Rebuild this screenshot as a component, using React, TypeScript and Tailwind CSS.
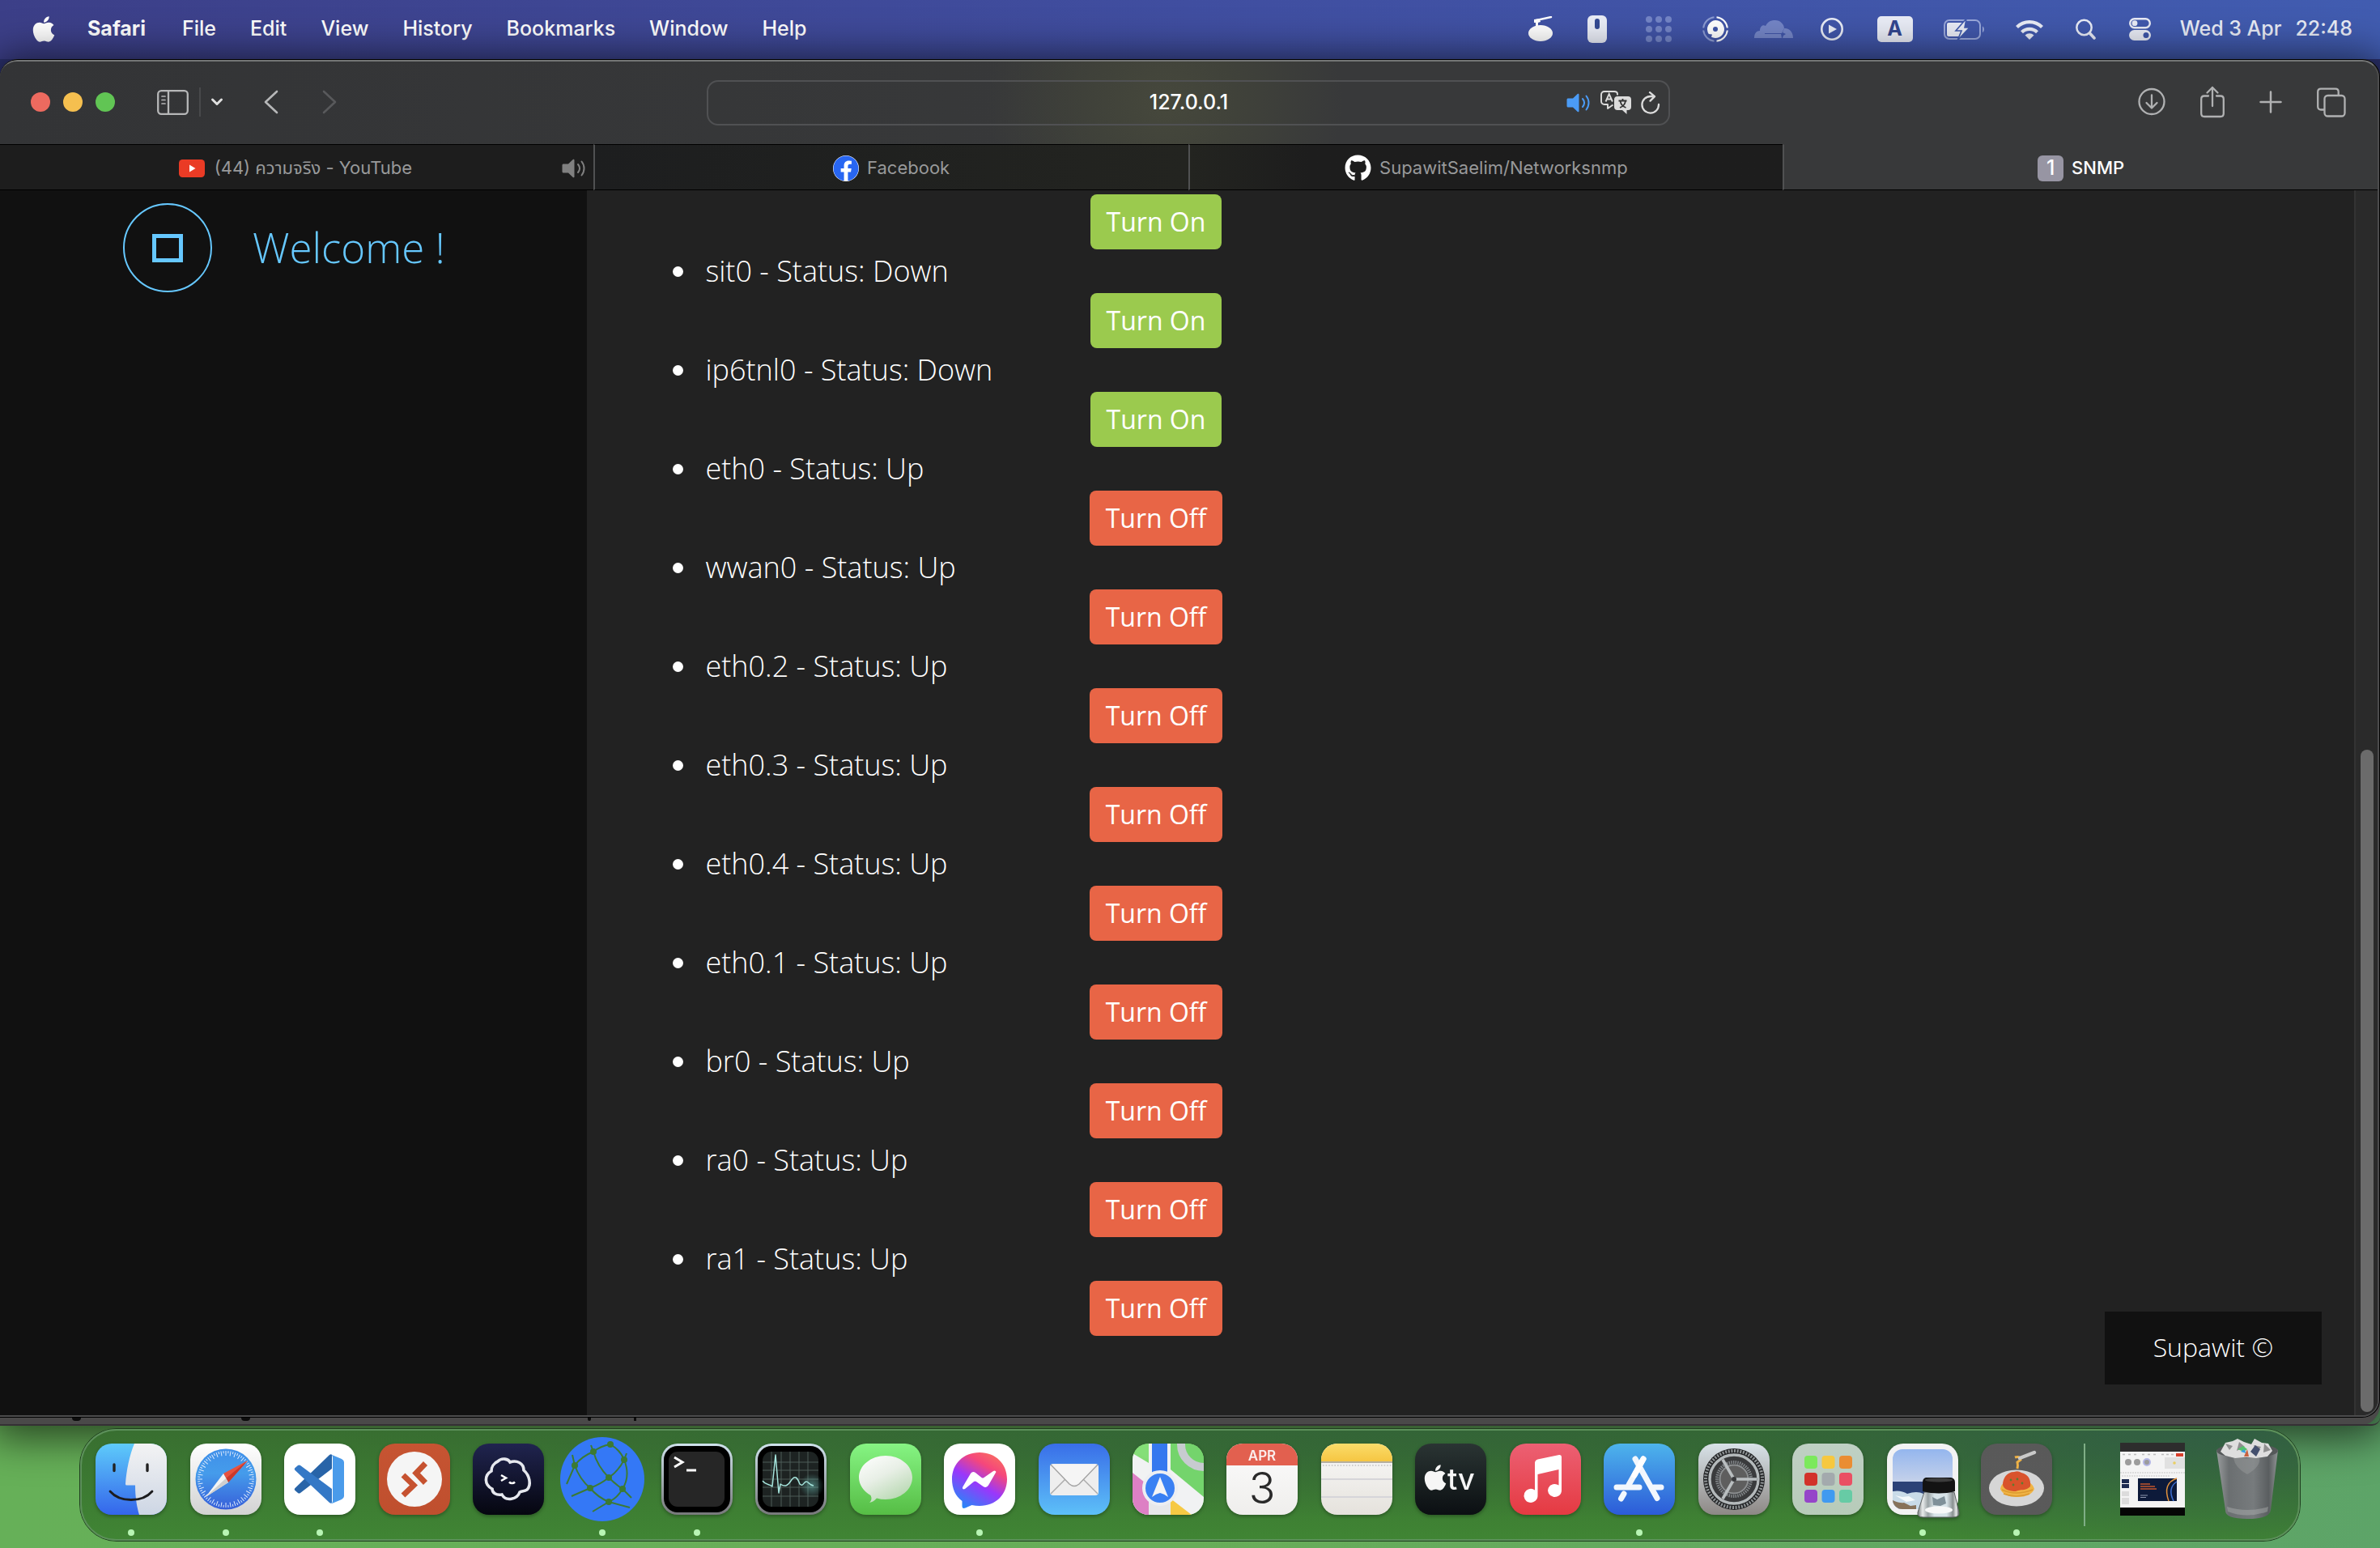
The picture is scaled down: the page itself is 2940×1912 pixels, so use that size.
import React from "react";
import { FaApple, FaFacebook, FaGithub } from "react-icons/fa";

const menus = ["File", "Edit", "View", "History", "Bookmarks", "Window", "Help"];

const interfaces = [
  { name: "sit0", up: false },
  { name: "ip6tnl0", up: false },
  { name: "eth0", up: true },
  { name: "wwan0", up: true },
  { name: "eth0.2", up: true },
  { name: "eth0.3", up: true },
  { name: "eth0.4", up: true },
  { name: "eth0.1", up: true },
  { name: "br0", up: true },
  { name: "ra0", up: true },
  { name: "ra1", up: true },
];

/* ---------- menu bar ---------- */

function MenuBar() {
  return (
    <header className="flex h-[73px] items-center justify-between bg-linear-to-r from-[#3c3f88] via-[#404ea0] to-[#415cb0] pr-[34px] pb-[2px] pl-[36px] text-[25px] font-medium text-white">
      <nav aria-label="Menu bar" className="flex items-center gap-[42px]">
        <button aria-label="Apple menu">
          <FaApple size={36} />
        </button>
        <button className="-ml-[6px] mr-[3px] font-bold">Safari</button>
        {menus.map((m) => (
          <button key={m}>{m}</button>
        ))}
      </nav>
      <div className="flex items-center text-[#e9ecf6]">
        <button aria-label="Recipes" className="mr-[43px]">
          <svg width="30" height="32" viewBox="0 0 30 32" fill="white">
            <ellipse cx="15" cy="21" rx="15" ry="10" />
            <path d="M10 5 28 1" stroke="white" strokeWidth="2.4" strokeLinecap="round" />
            <path d="M7 4 14 3 15 7 12 8v5H9V8H7z" />
          </svg>
        </button>
        <button aria-label="Mouse" className="mr-[48px]">
          <svg width="24" height="34" viewBox="0 0 24 34">
            <rect width="24" height="34" rx="6" fill="currentColor" />
            <rect x="9" y="4" width="6" height="13" rx="3" fill="#344a93" />
          </svg>
        </button>
        <button aria-label="Grid" className="mr-[38px]">
          <svg width="32" height="32" viewBox="0 0 32 32" fill="#7485c6">
            {[4, 16, 28].map((y) => [4, 16, 28].map((x) => <circle key={`${x}-${y}`} cx={x} cy={y} r="4" />))}
          </svg>
        </button>
        <button aria-label="Disc" className="mr-[32px]">
          <svg width="32" height="32" viewBox="0 0 32 32" fill="none">
            <path d="M17.5 1.2A15 15 0 0 1 30.8 14.500M30.800 17.500A15 15 0 0 1 17.500 30.800" stroke="white" strokeWidth="2" />
            <path d="M14.500 1.200A15 15 0 0 0 1.200 14.500M1.200 17.500A15 15 0 0 0 14.500 30.800" stroke="#8c9bd2" strokeWidth="2" />
            <path d="M16 5a11 11 0 1 1-5 20.800l1-3.300-4.200-.5A11 11 0 0 1 16 5z" fill="white" />
            <circle cx="16" cy="16" r="3" fill="#3f55a8" />
          </svg>
        </button>
        <button aria-label="Cloud" className="mr-[34px]">
          <svg width="48" height="24" viewBox="0 0 48 24" fill="#7485c6">
            <path d="M0 23c0-6 3-9 7-9 0-6 4-8 7-6C17 2 21 1 26 1c6 0 11 5 11 10l-3 6H13v1h20l1 5z" />
            <path d="m37 11 1 0c6 0 10 5 10 12H35l1-3 3-2-4-2z" />
          </svg>
        </button>
        <button aria-label="Now playing" className="mr-[42px]">
          <svg width="28" height="28" viewBox="0 0 28 28">
            <circle cx="14" cy="14" r="12.700" fill="none" stroke="currentColor" strokeWidth="2.600" />
            <path d="M10 8.500v11L20 14z" fill="currentColor" />
          </svg>
        </button>
        <button aria-label="Input source" className="mr-[38px] flex h-[32px] w-[44px] items-center justify-center rounded-[5px] bg-[#e9ecf6] text-[25px] font-bold text-[#33478f]">
          A
        </button>
        <button aria-label="Battery" className="mr-[38px]">
          <svg width="51" height="26" viewBox="0 0 51 26">
            <rect x="1" y="2" width="44" height="23" rx="6" fill="none" stroke="#9aa8da" strokeWidth="2" />
            <path d="M48 9.500c2.500.8 2.500 6.700 0 7.500z" fill="#9aa8da" />
            <path d="M6 5h17v17H6a2 2 0 0 1-2-2V7a2 2 0 0 1 2-2z" fill="currentColor" />
            <path d="M28 0 15 15h7l-5 12L32 11h-6z" fill="currentColor" stroke="#405aad" strokeWidth="1.600" />
          </svg>
        </button>
        <button aria-label="Wi-Fi" className="mr-[40px]">
          <svg width="34" height="26" viewBox="0 0 34 26" fill="none" stroke="currentColor" strokeWidth="4.200">
            <path d="M1.500 10.500a22 22 0 0 1 31 0" />
            <path d="M7.500 16.800a13.500 13.500 0 0 1 19 0" />
            <path d="m17 26-5.500-5.500a8 8 0 0 1 11 0z" fill="currentColor" stroke="none" />
          </svg>
        </button>
        <button aria-label="Search" className="mr-[41px]">
          <svg width="25" height="26" viewBox="0 0 25 26" fill="none" stroke="currentColor" strokeLinecap="round">
            <circle cx="10.500" cy="11" r="9.200" strokeWidth="2.500" />
            <path d="m17.500 18 5.500 6" strokeWidth="3.600" />
          </svg>
        </button>
        <button aria-label="Control Centre" className="mr-[36px]">
          <svg width="27" height="28" viewBox="0 0 27 28">
            <rect x="1.200" y="1.200" width="24.600" height="11" rx="5.500" fill="none" stroke="currentColor" strokeWidth="2.400" />
            <circle cx="7" cy="6.700" r="3.400" fill="currentColor" />
            <rect y="15" width="27" height="13" rx="6.500" fill="currentColor" />
            <circle cx="21" cy="21.500" r="3.500" fill="#3e56a8" />
          </svg>
        </button>
        <button className="flex gap-[17px]">
          <span>Wed 3 Apr</span>
          <span>22:48</span>
        </button>
      </div>
    </header>
  );
}

/* ---------- browser chrome ---------- */

function Speaker({ className }: { className: string }) {
  return (
    <svg width="30" height="24" viewBox="0 0 30 24" className={className} fill="none">
      <path d="M2.500 6.500H8L13.500 1.200c1-.9 2-.5 2 .6v20.400c0 1.100-1 1.500-2 .6L8 17.500H2.500C1 17.500.500 17 .500 15.500v-7c0-1.500.5-2 2-2z" fill="currentColor" />
      <path d="M20 7c2.500 3 2.500 7 0 10M24.500 3.500c4 5 4 12 0 17" stroke="currentColor" strokeWidth="2" strokeLinecap="round" />
    </svg>
  );
}

function Toolbar() {
  return (
    <div className="flex h-[102px] items-center bg-[radial-gradient(ellipse_220px_200px_at_49%_50%,#46483c,#40423a_40%,transparent)]">
      <div className="flex flex-1 items-center pb-[2px] pl-[38px] text-[#b6b7b8]">
        <div className="flex gap-[16px]">
          <button aria-label="Close" className="size-[24px] rounded-full bg-[#ed6a5f]" />
          <button aria-label="Minimise" className="size-[24px] rounded-full bg-[#f5bf4f]" />
          <button aria-label="Zoom" className="size-[24px] rounded-full bg-[#61c554]" />
        </div>
        <button aria-label="Show sidebar" className="ml-[52px]">
          <svg width="39" height="31" viewBox="0 0 39 31" fill="none" stroke="currentColor" strokeWidth="2.300">
            <rect x="1.200" y="1.200" width="36.600" height="28.600" rx="4" />
            <path d="M14 1v29" />
            <path d="M6 8h4M6 12.500h4M6 17h4" strokeWidth="1.700" strokeLinecap="round" />
          </svg>
        </button>
        <div className="ml-[13px] h-[36px] w-[2px] bg-[#48494b]" />
        <button aria-label="Tab groups" className="ml-[12px]">
          <svg width="16" height="12" viewBox="0 0 16 12" fill="none" stroke="#e0e0e0" strokeWidth="3" strokeLinecap="round" strokeLinejoin="round">
            <path d="m2.500 3 5.500 5.500L13.500 3" />
          </svg>
        </button>
        <button aria-label="Back" className="ml-[50px]">
          <svg width="18" height="30" viewBox="0 0 18 30" fill="none" stroke="currentColor" strokeWidth="2.600" strokeLinecap="round" strokeLinejoin="round">
            <path d="M16 2 2 15l14 13" />
          </svg>
        </button>
        <button aria-label="Forward" className="ml-[54px] text-[#58595b]">
          <svg width="18" height="30" viewBox="0 0 18 30" fill="none" stroke="currentColor" strokeWidth="2.600" strokeLinecap="round" strokeLinejoin="round">
            <path d="m2 2 14 13L2 28" />
          </svg>
        </button>
      </div>
      <div className="flex h-[56px] w-[40.500%] items-center gap-[12px] rounded-[14px] border-2 border-[#505153] pr-[10px]">
        <input
          aria-label="Address"
          defaultValue="127.0.0.1"
          className="min-w-0 flex-1 bg-transparent pl-[139px] text-center text-[25px] font-medium text-white outline-none"
        />
        <button aria-label="Mute this tab">
          <Speaker className="text-[#4b9bf5]" />
        </button>
        <button aria-label="Translate" className="text-[#dcdcdc]">
          <svg width="38" height="30" viewBox="0 0 38 30" fill="none">
            <path d="M15.500 17.500 9 22v-5H5c-2.500 0-4-1.500-4-4V5c0-2.500 1.500-4 4-4h12c2.500 0 4 1.500 4 3v1.500" stroke="currentColor" strokeWidth="1.900" strokeLinejoin="round" />
            <path d="m6.500 13.500 4.200-9.500 4.200 9.500M8 10.500h5.500" stroke="currentColor" strokeWidth="1.900" />
            <path d="M21 7h13c2.700 0 4 1.500 4 4v9c0 2.500-1.300 4-4 4h-1.500v5L27 24h-6c-2.500 0-4-1.500-4-4v-9c0-2.500 1.500-4 4-4z" fill="currentColor" />
            <path d="M22.500 12.500h10M27.500 10v2.500M24 21c4-1.500 6.500-4.500 7-8.500M31.500 21c-4-1.500-6.500-4.500-7-8.500" stroke="#333" strokeWidth="1.800" />
          </svg>
        </button>
        <button aria-label="Reload" className="text-[#dcdcdc]">
          <svg width="24" height="28" viewBox="0 0 24 28" fill="none" stroke="currentColor" strokeWidth="2.300" strokeLinecap="round" strokeLinejoin="round">
            <path d="M22 16a10.300 10.300 0 1 1-10-10h4.500M11 1.200l6 4.900-5.500 5.500" />
          </svg>
        </button>
      </div>
      <div className="flex flex-1 items-center justify-end gap-[43px] pr-[39px] pb-[2px] text-[#b0b1b2]">
        <button aria-label="Downloads">
          <svg width="34" height="36" viewBox="0 0 34 36" fill="none" stroke="currentColor" strokeWidth="2.300" strokeLinecap="round" strokeLinejoin="round">
            <circle cx="17" cy="17.500" r="15.500" />
            <path d="M17 9.500v15M10.500 19l6.500 6.500 6.500-6.500" />
          </svg>
        </button>
        <button aria-label="Share">
          <svg width="30" height="40" viewBox="0 0 30 40" fill="none" stroke="currentColor" strokeWidth="2.300" strokeLinecap="round" strokeLinejoin="round">
            <path d="M10 12.500H5c-2.500 0-3.800 1.300-3.800 3.800v18c0 2.400 1.300 3.700 3.800 3.700h20c2.500 0 3.800-1.300 3.800-3.700v-18c0-2.500-1.300-3.800-3.800-3.800h-5M15 25V2M8.500 8.500 15 2l6.500 6.500" />
          </svg>
        </button>
        <button aria-label="New tab">
          <svg width="28" height="28" viewBox="0 0 28 28" stroke="currentColor" strokeWidth="2.500" strokeLinecap="round">
            <path d="M14 1.500v25M1.500 14h25" />
          </svg>
        </button>
        <button aria-label="Tab overview">
          <svg width="36" height="37" viewBox="0 0 36 37" fill="none" stroke="currentColor" strokeWidth="2.300" strokeLinejoin="round">
            <rect x="9.500" y="10" width="25" height="25.500" rx="4" />
            <path d="M9.500 27.500H5c-2.300 0-3.800-1.500-3.800-3.800V5.500C1.200 3 2.700 1.700 5 1.700h18c2.300 0 3.700 1.300 3.700 3.800V10" />
          </svg>
        </button>
      </div>
    </div>
  );
}

function TabBar() {
  const tab = "flex min-w-0 flex-1 items-center justify-center border-y border-black pt-[2px]";
  return (
    <div role="tablist" aria-label="Tabs" className="flex h-[57px] bg-[#38393a] text-[22px] text-[#98999a]">
      <button role="tab" className={`${tab} gap-[12px] bg-[#1d1d1d]`}>
        <span className="w-[36px]" />
        <span className="flex flex-1 items-center justify-center gap-[12px]">
          <svg width="32" height="22" viewBox="0 0 32 22">
            <rect width="32" height="22" rx="4.500" fill="#ea3b25" />
            <path d="M13 6.500v9l7.500-4.500z" fill="white" />
          </svg>
          <span>(44) ความจริง - YouTube</span>
        </span>
        <Speaker className="mr-[9px] text-[#808080]" />
      </button>
      <button role="tab" className={`${tab} gap-[10px] border-l-2 border-l-[#505152] bg-linear-to-r from-[#1d1e1f] to-[#232420]`}>
        <span className="rounded-full bg-white text-[#2866f2]">
          <FaFacebook size={32} />
        </span>
        Facebook
      </button>
      <button role="tab" className={`${tab} gap-[10px] border-l-2 border-l-[#505152] bg-linear-to-r from-[#232420] to-[#1d1d1d] to-20%`}>
        <FaGithub size={33} className="text-white" />
        SupawitSaelim/Networksnmp
      </button>
      <button role="tab" aria-selected className={`${tab} gap-[10px] border-l-2 border-t-transparent border-l-[#505152] font-medium text-white`}>
        <span className="flex size-[32px] items-center justify-center rounded-[6px] bg-[#9795a3] text-[25px]">1</span>
        SNMP
      </button>
    </div>
  );
}

/* ---------- web page ---------- */

function PowerButton({ up }: { up: boolean }) {
  return (
    <div className="flex justify-center">
      <button
        className={`h-[68px] rounded-[8px] px-[20px] text-[32px] leading-[68px] font-normal ${up ? "bg-[#e86546]" : "bg-[#9bca4e]"}`}
      >
        {up ? "Turn Off" : "Turn On"}
      </button>
    </div>
  );
}

function WebPage() {
  return (
    <div className="flex flex-1 bg-[#222222] font-['Open_Sans',sans-serif] font-light text-white">
      <aside className="w-[24.700%] bg-[#111111] pt-[16px] pl-[152px] text-[#66c8ff]">
        <div className="flex items-center gap-[50px]">
          <div className="flex size-[110px] items-center justify-center rounded-full border-2 border-[#66c8ff]">
            <div className="h-[35px] w-[38px] border-[5px] border-[#66c8ff]" />
          </div>
          <h1 className="pb-[3px] text-[51px] leading-[72px]">Welcome !</h1>
        </div>
      </aside>
      <main className="flex flex-1 justify-between pt-[5px]">
        <div className="ml-[146px] w-[51%] pb-[98px]">
          <PowerButton up={false} />
          <ul className="list-disc text-[36px] leading-[54px]">
            {interfaces.map((i) => (
              <li key={i.name} className="-ml-[8px] pl-[8px]">
                {i.name} - Status: {i.up ? "Up" : "Down"}
                <PowerButton up={i.up} />
              </li>
            ))}
          </ul>
        </div>
        <footer className="mr-[40px] mb-[38px] self-end bg-[#111111] px-[60px] pb-[2px] text-[32px] leading-[88px]">Supawit ©</footer>
      </main>
      <div className="flex w-[29px] flex-col items-center border-l-2 border-[#333333] bg-[#2a2a2a]">
        <div className="grow-[691]" />
        <div className="w-[16px] grow-[818] rounded-full bg-[#6b6b6b]" />
        <div className="h-[4px]" />
      </div>
    </div>
  );
}

/* ---------- dock icons, each drawn on an 88 x 88 tile ---------- */

function Tile({ id, from, to, children }: { id: string; from: string; to: string; children?: React.ReactNode }) {
  return (
    <svg width="88" height="88" viewBox="0 0 88 88" className="overflow-visible drop-shadow-[0_2px_2px_rgba(0,0,0,0.3)]">
      <defs>
        <linearGradient id={`${id}-bg`} x1="0" y1="0" x2="0" y2="1">
          <stop offset="0" stopColor={from} />
          <stop offset="1" stopColor={to} />
        </linearGradient>
        <clipPath id={`${id}-clip`}>
          <rect width="88" height="88" rx="20" />
        </clipPath>
      </defs>
      <rect width="88" height="88" rx="20" fill={`url(#${id}-bg)`} />
      <g clipPath={`url(#${id}-clip)`}>{children}</g>
    </svg>
  );
}

const ring = (n: number) => Array.from({ length: n }, (_, k) => (k * 360) / n);

const Finder = () => (
  <Tile id="finder" from="#5ecbfa" to="#3465eb">
    <defs>
      <linearGradient id="finder-r" x1="0" y1="0" x2="0" y2="1">
        <stop offset="0" stopColor="#f3f3f4" />
        <stop offset="1" stopColor="#cdd6e4" />
      </linearGradient>
    </defs>
    <path d="M48 0C42 14 38 34 37 50q0 1.500 1.500 1.500H49C49 66 51 78 54 88h34V0z" fill="url(#finder-r)" />
    <path d="M23 26v7.500M64 26v7.500" stroke="#222" strokeWidth="3.400" strokeLinecap="round" />
    <path d="M18 59c12 14 40 14 52 0" fill="none" stroke="#1c1c1e" strokeWidth="2.800" strokeLinecap="round" />
  </Tile>
);

const Safari = () => (
  <Tile id="safari" from="#ffffff" to="#d2d2d2">
    <defs>
      <linearGradient id="safari-c" x1="0" y1="0" x2="0" y2="1">
        <stop offset="0" stopColor="#3f8fe9" />
        <stop offset=".4" stopColor="#459ceb" />
        <stop offset="1" stopColor="#375fd9" />
      </linearGradient>
    </defs>
    <circle cx="44" cy="44" r="37.500" fill="url(#safari-c)" />
    {ring(72).map((a, k) => (
      <path key={a} d={k % 2 ? "M44 9v3" : "M44 9v6"} stroke="#dceafc" strokeWidth="1" transform={`rotate(${a} 44 44)`} />
    ))}
    <path d="M71 21 41 37l6 11z" fill="#e8523f" />
    <path d="m71 21-24 27-3-5z" fill="#c9392c" />
    <path d="M19 66 41 37l6 11z" fill="#f4f4f4" />
    <path d="m19 66 28-18-3-5z" fill="#cfcfcf" />
  </Tile>
);

const VSCode = () => (
  <Tile id="code" from="#ffffff" to="#ffffff">
    <path d="M13.500 55c-1 1-1 2 0 3l3.500 3c1 .8 2 .7 3 0l39-30V14q-1-1.500-3 0z" fill="#2864a8" />
    <path d="M13.500 33c-1-1-1-2 0-3l3.500-3c1-.8 2-.7 3 0l39 29v17q-1 1.500-3 0z" fill="#3478c6" />
    <path d="M58 13.500 71 19q3 1.500 3 4v42q0 2.500-3 4l-13 5.500q2-1 2-4v-53q0-3-2-4z" fill="#4a9bea" />
  </Tile>
);

const RemoteDesktop = () => (
  <Tile id="rdp" from="#c65432" to="#bf4f2e">
    <circle cx="44" cy="44" r="34" fill="#f5f5f5" />
    <g fill="none" stroke="#c65230" strokeWidth="7">
      <path d="m30 39 13 12.500L30 64" />
      <path d="M57.500 24.500 46 36.500l11.500 12" />
    </g>
  </Tile>
);

const Termius = () => (
  <Tile id="termius" from="#20244f" to="#05060f">
    <path
      d="M31 22c5-5 13-3 15 1 8-3 17 1 17 10 7 6 10 18 4 24-3 2-7 2-9 3-3 9-17 12-22 3-7 1-12-2-12-7-10-5-10-17-1-22 0-5 3-10 8-12z"
      fill="none"
      stroke="#e6e8ee"
      strokeWidth="3.600"
    />
    <path d="m35 39 6 3.500-6 3.500" fill="none" stroke="white" strokeWidth="2.600" />
    <path d="M45 47.500c2 2 5 2 7 0" fill="none" stroke="white" strokeWidth="2.600" />
  </Tile>
);

const NetworkGlobe = () => (
  <svg width="88" height="88" viewBox="0 0 88 88" className="overflow-visible">
    <circle cx="44" cy="44" r="52" fill="#3478f6" />
    <g fill="none" stroke="#3c7a33" strokeWidth="2">
      <path d="M30 2 33 10Q42 3 54 1M33 10Q18 16 10 27L0 50M10 27 7 14M33 10Q38 28 52 42M54 1Q66 8 71 20L74 12M71 20Q64 34 52 42M71 20Q79 40 69 56M10 27Q16 44 29 55M52 42Q42 50 29 55M52 42Q60 50 69 56M29 55 6 65M29 55Q38 66 52 72M69 56Q62 68 52 72M69 56 80 67M52 72 32 84M52 72 78 79" />
    </g>
    <g fill="#3c7a33">
      {[[54, 1], [33, 10], [71, 20], [10, 27], [52, 42], [29, 55], [69, 56], [52, 72]].map(([x, y]) => (
        <circle key={`${x}-${y}`} cx={x} cy={y} r="4" />
      ))}
    </g>
  </svg>
);

const Terminal = () => (
  <Tile id="terminal" from="#cfe2ec" to="#77787a">
    <rect x="3" y="3" width="82" height="82" rx="17" fill="black" />
    <rect x="9" y="10" width="69" height="68" rx="11" fill="#262626" />
    <path d="m16 17 10 6-10 6M31 33h12" fill="none" stroke="white" strokeWidth="3" />
  </Tile>
);

const Activity = () => (
  <Tile id="activity" from="#cfe2ec" to="#77787a">
    <defs>
      <radialGradient id="activity-glow">
        <stop offset="0" stopColor="#6fc7bd" stopOpacity=".5" />
        <stop offset="1" stopColor="#6fc7bd" stopOpacity="0" />
      </radialGradient>
    </defs>
    <rect x="3" y="3" width="82" height="82" rx="17" fill="black" />
    <rect x="9" y="10" width="69" height="68" rx="11" fill="#1d2322" />
    <path d="M20 10v68M32 10v68M43 10v68M54 10v68M65 10v68M9 23h69M9 33h69M9 44h69M9 54h69M9 65h69" stroke="#52625f" strokeWidth=".9" />
    <circle cx="70" cy="52" r="15" fill="url(#activity-glow)" />
    <path d="M9 46c4 6 8 3 12 7l4-39 4 47 2-11c6 4 9 2 13-4 5-8 8-4 11 4 4 4 5-3 8-3 3 0 3 4 9 5" fill="none" stroke="#a5e4dc" strokeWidth="1.500" strokeLinejoin="round" />
  </Tile>
);

const Messages = () => (
  <Tile id="messages" from="#86f483" to="#56bd45">
    <defs>
      <linearGradient id="messages-b" x1="0" y1="0" x2=".6" y2="1">
        <stop offset="0" stopColor="#ffffff" />
        <stop offset=".5" stopColor="#e8efe6" />
        <stop offset="1" stopColor="#b9d9b3" />
      </linearGradient>
    </defs>
    <path d="M44 15c18 0 33 12 33 27S62 69 44 69q-6 0-11-1.500-4 4.500-9 5.500c3-3 3-6 1.500-9C17 59 11 51 11 42c0-15 15-27 33-27z" fill="url(#messages-b)" />
  </Tile>
);

const Messenger = () => (
  <Tile id="messenger" from="#ffffff" to="#ffffff">
    <defs>
      <linearGradient id="messenger-b" x1=".2" y1="1" x2=".8" y2="0">
        <stop offset="0" stopColor="#2389f7" />
        <stop offset=".45" stopColor="#9a37fb" />
        <stop offset=".75" stopColor="#f5477b" />
        <stop offset="1" stopColor="#f9705f" />
      </linearGradient>
    </defs>
    <path d="M44 11c20 0 34 14 34 33S64 77 44 77q-5 0-9.500-1l-8 3.500q-4 1.500-4-2.500v-6C14 65 10 55 10 44c0-19 14-33 34-33z" fill="url(#messenger-b)" />
    <path d="m23 54 10-17q2.500-3.500 6-1l7.500 6q1.500 1 3 0L61 34q2.500-1.500 3.500 1L55 51.500q-2.500 4-6.500 1.500L40 47q-1.500-1-3 0L26 56q-3.500 1.500-3-2z" fill="white" />
  </Tile>
);

const Mail = () => (
  <Tile id="mail" from="#396ee8" to="#5dc0f8">
    <rect x="14" y="25" width="60" height="39" rx="4" fill="#eeeeee" />
    <path d="m15 62 20-20M73 62 53 42" stroke="#a9a9a9" strokeWidth="1.400" />
    <path d="m15 26 23 24q6 5 12 0l23-24" fill="#f5f5f5" stroke="#a3a3a3" strokeWidth="1.400" />
  </Tile>
);

const MapsIcon = () => (
  <Tile id="maps" from="#8be07b" to="#64cc5f">
    <path d="M0 12 20 24V0h28v30l40 34v24H0z" fill="#f1f2f3" />
    <path d="M47 0h41v66L47 32z" fill="#74d46c" />
    <circle cx="88" cy="1" r="28" fill="none" stroke="#c7cbd0" strokeWidth="10" />
    <path d="M0 0h20v20L0 8z" fill="#84df78" />
    <path d="M0 36 20 52v36H0z" fill="#dd80c4" />
    <path d="m47 68 26 20H47z" fill="#f6c944" />
    <path d="M20 50h27v38H20z" fill="#e7e8ea" />
    <path d="M24 0h19v40H24z" fill="#3578ef" />
    <circle cx="34" cy="55" r="20" fill="#3a80f3" stroke="#eceef2" strokeWidth="4" />
    <path d="m34 41 10 25q-5-4-10-5-5 1-10 5z" fill="#f4f4f6" />
  </Tile>
);

const CalendarIcon = () => (
  <Tile id="calendar" from="#fcfcfc" to="#efeeec">
    <rect width="88" height="27" fill="#e2604f" />
    <text x="44" y="21" textAnchor="middle" fontSize="17" fontWeight="600" fill="#fbeeec" className="font-[Inter]">APR</text>
    <text x="44" y="74" textAnchor="middle" fontSize="54" fontWeight="300" fill="#2a2a2a" className="font-[Inter]">3</text>
  </Tile>
);

const Notes = () => (
  <Tile id="notes" from="#fafafa" to="#e5e2dc">
    <defs>
      <linearGradient id="notes-top" x1="0" y1="0" x2="0" y2="1">
        <stop offset="0" stopColor="#fadc6a" />
        <stop offset="1" stopColor="#f6c642" />
      </linearGradient>
    </defs>
    <rect width="88" height="22" fill="url(#notes-top)" />
    <path d="M0 23h88" stroke="#b5afa0" strokeWidth="2" />
    <path d="M2 27h86" stroke="#c2c2c2" strokeWidth="1.600" strokeDasharray="1.600 2" />
    <path d="M0 44h88M0 66h88" stroke="#d6d5d9" strokeWidth="1.800" />
  </Tile>
);

const AppleTV = () => (
  <Tile id="tv" from="#2a3433" to="#0b0f12">
    <FaApple x="7" y="24" size={36} color="#f6f6f6" />
    <text x="40" y="57" fontSize="36" fontWeight="500" fill="#f6f6f6" className="font-[Inter]">tv</text>
  </Tile>
);

const Music = () => (
  <Tile id="music" from="#ec6073" to="#e53a42">
    <path d="M31 24q0-3.500 3.500-4.500L61 14q3-.5 3 2.500V58a8.500 8 0 1 1-3.500-6.500V32L34.500 38v26a8.500 8.500 0 1 1-3.500-6.500z" fill="white" />
  </Tile>
);

const AppStore = () => (
  <Tile id="store" from="#4db4ec" to="#2c5bd8">
    <g fill="none" stroke="#f2f7fd" strokeWidth="7" strokeLinecap="round">
      <path d="M16 54h28M62 54h9" />
      <path d="M49 19 31 51M25 62l-3.500 6" />
      <path d="m39 19 27 48.500" />
      <path d="M49 19 38 39" stroke="#ffffff" />
    </g>
  </Tile>
);

const Settings = () => (
  <Tile id="settings" from="#d8e2e8" to="#8d8885">
    <circle cx="44" cy="44" r="38" fill="#222325" />
    <circle cx="44" cy="44" r="35" fill="none" stroke="#8f9496" strokeWidth="4" strokeDasharray="2 1.660" />
    <circle cx="44" cy="44" r="30" fill="#3a3b3d" stroke="#b4b9bb" strokeWidth="3.400" />
    <circle cx="44" cy="44" r="21" fill="none" stroke="#83878a" strokeWidth="4" strokeDasharray="1.500 1.200" />
    <circle cx="44" cy="44" r="17.500" fill="#5e5e5e" stroke="#8c8f91" strokeWidth="2" />
    {[0, 120, 240].map((a) => (
      <path key={a} d="M44 44h28" stroke="#b9bec0" strokeWidth="3.600" transform={`rotate(${a} 44 44)`} />
    ))}
    <circle cx="44" cy="44" r="3" fill="#3a3b3d" />
  </Tile>
);

const Launchpad = () => (
  <Tile id="launchpad" from="#bfd0c4" to="#b7cbb9">
    {["#7be95c", "#f6c83f", "#ea8d33", "#d2322a", "#a3aaad", "#ea4f63", "#9545c9", "#409af0", "#67cba5"].map((c, k) => (
      <rect key={c} x={15 + (k % 3) * 21.500} y={15 + Math.floor(k / 3) * 21} width="16" height="16" rx="4" fill={c} />
    ))}
  </Tile>
);

const Preview = () => (
  <svg width="88" height="88" viewBox="0 0 88 88" className="overflow-visible drop-shadow-[0_2px_2px_rgba(0,0,0,0.3)]">
    <defs>
      <linearGradient id="preview-sky" x1="0" y1="0" x2="0" y2="1">
        <stop offset="0" stopColor="#94b6ee" />
        <stop offset="1" stopColor="#c6d2ea" />
      </linearGradient>
      <linearGradient id="preview-glass" x1="0" y1="0" x2="1" y2="0">
        <stop offset="0" stopColor="#777c7c" />
        <stop offset=".12" stopColor="#e9ecec" />
        <stop offset=".25" stopColor="#9aa3a5" />
        <stop offset=".4" stopColor="#d7e3e8" />
        <stop offset=".7" stopColor="#d7e3e8" />
        <stop offset=".85" stopColor="#8b9192" />
        <stop offset=".93" stopColor="#e4e6e6" />
        <stop offset="1" stopColor="#5f6363" />
      </linearGradient>
      <clipPath id="preview-clip">
        <rect x="7" y="7" width="74" height="74" rx="12" />
      </clipPath>
    </defs>
    <rect width="88" height="88" rx="20" fill="#f2f2f3" />
    <g clipPath="url(#preview-clip)">
      <path d="M7 7h74v41H7z" fill="url(#preview-sky)" />
      <path d="M7 47h74v34H7z" fill="#2c4277" />
      <path d="M7 59q10-2 18 3 12-4 20 0v22H7z" fill="#c9dbe8" />
      <path d="M7 70q9 4 14 3l8 4 7-1v8H7z" fill="#87725a" />
      <path d="m10 64 9 2 8-1 8 5-11 2z" fill="#f4f9fb" />
    </g>
    <path d="M46 60h37l6 25q1 6-8 6H45q-8 0-7-6z" fill="url(#preview-glass)" stroke="#5d6262" strokeWidth="1" />
    <path d="m56 66 6 3 9-4 2 9-7 3-9-1z" fill="#7f9099" />
    <ellipse cx="64" cy="82" rx="17" ry="4.500" fill="#f7f8f8" />
    <path d="M44 48q0-5 4-6h31q5 1 5 6v11q-20 5-40 0z" fill="#131313" />
    <ellipse cx="64" cy="45" rx="17" ry="2.600" fill="#3c3c3c" />
  </svg>
);

const Spaghetti = () => (
  <Tile id="pasta" from="#595959" to="#5a5a5a">
    <ellipse cx="44" cy="55" rx="34" ry="22.500" fill="#d6d6d6" />
    <path d="M24 56q2-12 20-12t22 12q-4 10-21 10T24 56z" fill="#f0b445" />
    <path d="M28 62q15 6 32 0M26 57q17 8 38 0" fill="none" stroke="#dc9a30" strokeWidth="1.500" />
    <path d="M27 51c0-8 5-16 14-16q5-2 9 1c9 2 12 9 11 17-5 6-13 3-18 6-7 0-15-2-16-8z" fill="#d9532c" />
    <g fill="#5f7a30">
      <circle cx="37" cy="45" r="1.400" />
      <circle cx="45" cy="44" r="1.400" />
      <circle cx="51" cy="49" r="1.400" />
      <circle cx="40" cy="51" r="1.400" />
    </g>
    <path d="M42 17q6-2 7 3l-4 3q1 4 0 8" fill="none" stroke="#edb146" strokeWidth="3" />
    <path d="m48 18 18-7" stroke="#c9c9c9" strokeWidth="4.500" strokeLinecap="round" />
  </Tile>
);

const MinimisedWindow = () => (
  <svg width="80" height="90" viewBox="0 0 80 90">
    <rect width="80" height="90" fill="#050505" />
    <rect width="80" height="11" fill="#2d2d2d" />
    <rect y="11" width="80" height="69" fill="#f4f4f4" />
    <rect x="69" y="13" width="9" height="4" fill="#d9402c" />
    <path d="M3 14.500h20M27 14.500h20M51 14.500h3M57 14.500h3M63 14.500h3" stroke="#bdbdbd" strokeWidth="1.500" strokeDasharray="3 4" />
    <rect x="55" y="18" width="25" height="14" fill="#e1e1e1" />
    <circle cx="67" cy="25" r="1.800" fill="#e9cf62" />
    <g fill="#9c9c9c">
      <circle cx="10" cy="24" r="4" />
      <circle cx="21" cy="24" r="4" />
      <circle cx="33" cy="24" r="4" stroke="#b4b6e6" strokeWidth="2" />
    </g>
    <path d="M0 37h80M2 41h60" stroke="#d5d5d5" strokeWidth="1.500" strokeDasharray="2 1" />
    <path d="M2 45h9v5H2zM2 51h9v5H2z" fill="#1c2b50" />
    <path d="M2 60h9v6H2zM2 68h9v8H2z" fill="#dcdcdc" />
    <rect x="22" y="44" width="48" height="28" fill="#0d1a3a" />
    <path d="M25 51h12M25 54h18M25 57h20" stroke="#c1552c" strokeWidth="1.600" />
    <path d="M25 65h9M25 67.500h7" stroke="#8c96ad" strokeWidth="1" />
    <path d="M70 44Q52 50 60 72" fill="none" stroke="#e2913b" strokeWidth="1.500" />
    <path d="M70 48Q58 56 66 72" fill="none" stroke="#3d6fd1" strokeWidth="1.500" />
  </svg>
);

const Trash = () => (
  <svg width="78" height="100" viewBox="0 0 78 100">
    <defs>
      <linearGradient id="trash-g" x1="0" y1="0" x2="1" y2="0">
        <stop offset="0" stopColor="#9a9d9e" />
        <stop offset=".2" stopColor="#6b6f71" />
        <stop offset=".6" stopColor="#777b7d" />
        <stop offset=".85" stopColor="#5a5e60" />
        <stop offset="1" stopColor="#909495" />
      </linearGradient>
    </defs>
    <path d="M1 14q37-12 76 0l-9 74q-1 11-29 11T12 88z" fill="url(#trash-g)" />
    <ellipse cx="39" cy="15" rx="38" ry="9" fill="#55595a" />
    <path d="m6 16 6-11 9-2 6-3 8 4 9 3 4-7 9 5 8 1 5 9-6 7-14 2-12-1-14 1-12-3z" fill="#dedede" />
    <path d="m12 6 9 3-4 5zM29 4l7 6-10 5zM47 8l9 2-6 9zM60 6l8 8-9 3z" fill="#8e8e8e" />
    <path d="m27 13 7-4 5 4-4 3z" fill="#54c06d" />
    <path d="m31 16 4-3 3 5z" fill="#3a9fe0" />
    <path d="m43 16 6-8 6 5-5 9z" fill="#44506e" />
    <path d="m35 22 4-9 2 9z" fill="#c9603d" />
    <path d="M22 24h32q2 10-15 20-15-8-17-20z" fill="#a5a8a9" opacity=".35" />
    <path d="M14 84q25 8 51 0l-1 6q-25 9-49 0z" fill="#b6b9ba" opacity=".4" />
  </svg>
);

const dockApps: { name: string; icon: React.ReactNode; open?: boolean }[] = [
  { name: "Finder", icon: <Finder />, open: true },
  { name: "Safari", icon: <Safari />, open: true },
  { name: "Visual Studio Code", icon: <VSCode />, open: true },
  { name: "Remote Desktop", icon: <RemoteDesktop /> },
  { name: "Termius", icon: <Termius /> },
  { name: "Network", icon: <NetworkGlobe />, open: true },
  { name: "Terminal", icon: <Terminal />, open: true },
  { name: "Activity Monitor", icon: <Activity /> },
  { name: "Messages", icon: <Messages /> },
  { name: "Messenger", icon: <Messenger />, open: true },
  { name: "Mail", icon: <Mail /> },
  { name: "Maps", icon: <MapsIcon /> },
  { name: "Calendar", icon: <CalendarIcon /> },
  { name: "Notes", icon: <Notes /> },
  { name: "TV", icon: <AppleTV /> },
  { name: "Music", icon: <Music /> },
  { name: "App Store", icon: <AppStore />, open: true },
  { name: "System Settings", icon: <Settings /> },
  { name: "Launchpad", icon: <Launchpad /> },
  { name: "Preview", icon: <Preview />, open: true },
  { name: "Spaghetti", icon: <Spaghetti />, open: true },
];

function DockItem({ name, open, children }: { name: string; open?: boolean; children: React.ReactNode }) {
  return (
    <button aria-label={name} className="flex flex-1 flex-col items-center gap-[18px]">
      <span className="flex h-[88px] items-center">{children}</span>
      <span className={`size-[8px] rounded-full ${open ? "bg-[#b8f5b4]" : "bg-transparent"}`} />
    </button>
  );
}

function Dock() {
  return (
    <nav
      aria-label="Dock"
      className="relative mx-[98px] mt-[3px] mb-[9px] flex rounded-[46px] border border-[#1f3d1f] bg-[radial-gradient(ellipse_600px_160px_at_96%_0%,rgba(48,90,72,0.8),transparent),radial-gradient(ellipse_1400px_110px_at_62%_0%,#336437,transparent),linear-gradient(to_bottom,#386e30,#408534)]"
    >
      <div className="flex flex-1 rounded-[45px] border-2 border-[#5c905a] pt-[16px] pr-[5px] pb-[4px] pl-[3px]">
        <div className="flex flex-[21] items-start">
          {dockApps.map((a) => (
            <DockItem key={a.name} name={a.name} open={a.open}>
              {a.icon}
            </DockItem>
          ))}
        </div>
        <div className="mx-[25px] h-[102px] w-[2px] bg-[#7fae86]" />
        <div className="flex flex-[2] items-start">
          <DockItem name="Minimised window">
            <MinimisedWindow />
          </DockItem>
          <DockItem name="Bin">
            <Trash />
          </DockItem>
        </div>
      </div>
    </nav>
  );
}

export default function App() {
  return (
    <div className="flex min-h-screen flex-col bg-linear-to-r from-[#66b058] via-[#68ad58] to-[#5da468] font-[Inter,'Noto_Sans_Thai',sans-serif]">
      <MenuBar />
      <div className="flex flex-1 flex-col bg-linear-to-b from-[#2c3270] from-50% to-transparent to-50%">
        <div className="flex flex-1 flex-col rounded-t-[22px] rounded-br-[26px] bg-[#4a4949] shadow-[0_6px_50px_10px_rgba(0,0,0,0.6)]">
          <div className="flex flex-1 flex-col overflow-hidden rounded-t-[22px] rounded-br-[22px] border-y border-r border-black bg-linear-to-r from-[#333436] to-[#38393a] to-50%">
            <div className="flex flex-1 flex-col overflow-hidden rounded-t-[21px] rounded-br-[21px] border-y-2 border-r-2 border-[#4c4c4d] border-t-[#747676]">
              <Toolbar />
              <TabBar />
              <WebPage />
            </div>
          </div>
          <div aria-hidden="true" className="flex h-[10px] rounded-br-[26px] border-b-2 border-[#353035] pl-[89px]">
            <span className="h-[4px] w-[11px] rounded-b-full bg-[#0c0c0c]" />
            <span className="ml-[198px] h-[4px] w-[11px] rounded-b-full bg-[#0c0c0c]" />
            <span className="ml-[417px] h-[4px] w-[4px] rounded-b-full bg-[#0c0c0c]" />
            <span className="ml-[53px] h-[4px] w-[3px] bg-[#0c0c0c]" />
          </div>
        </div>
      </div>
      <Dock />
    </div>
  );
}
